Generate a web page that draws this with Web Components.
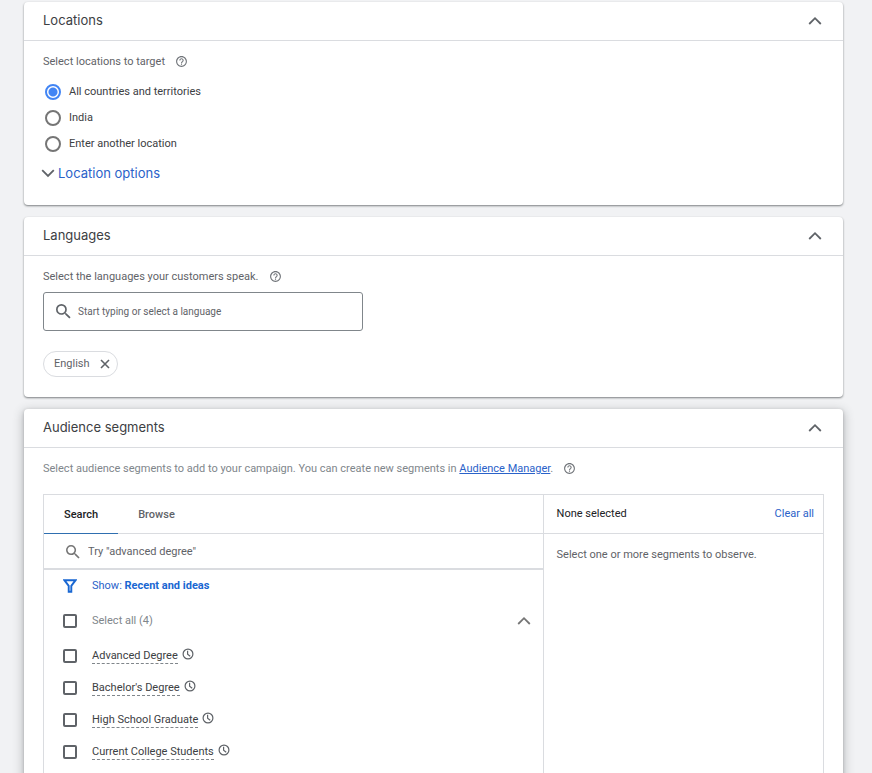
<!DOCTYPE html>
<html lang="en">
<head>
<meta charset="utf-8">
<title>Campaign settings</title>
<style>
  html { background: #f1f2f4; }
  body {
    margin: 0;
    padding: 2px 29px 24px 24px;
    font: 11px/20px Roboto, "Liberation Sans", sans-serif;
    color: #5f6368;
    --line: #dadce0;
    --blue: #2a62c9;
    --ink: #3c4043;
    --icon: #5f6368;
  }
</style>
</head>
<body>
<campaign-settings></campaign-settings>

<script>
const ICONS = {
  up: ['0 0 14 14', '<path d="M1.2 10 7 4.2 12.8 10" fill="none" stroke="currentColor" stroke-width="1.8"/>'],
  down: ['0 0 14 14', '<path d="M1.2 4.2 7 10l5.800-5.800" fill="none" stroke="currentColor" stroke-width="1.8"/>'],
  help: ['0 0 24 24', '<path fill="currentColor" d="M11 18h2v-2h-2v2zm1-16C6.480 2 2 6.480 2 12s4.480 10 10 10 10-4.480 10-10S17.520 2 12 2zm0 18c-4.410 0-8-3.590-8-8s3.590-8 8-8 8 3.590 8 8-3.590 8-8 8zm0-14c-2.210 0-4 1.790-4 4h2c0-1.100.9-2 2-2s2 .9 2 2c0 2-3 1.750-3 5h2c0-2.250 3-2.500 3-5 0-2.210-1.790-4-4-4z"/>'],
  search: ['3 3 18 18', '<path fill="currentColor" d="M15.500 14h-.79l-.28-.27A6.471 6.471 0 0 0 16 9.500 6.500 6.500 0 1 0 9.500 16c1.610 0 3.090-.59 4.230-1.570l.27.28v.79l5 4.990L20.490 19l-4.990-5zm-6 0C7.010 14 5 11.990 5 9.500S7.010 5 9.500 5 14 7.010 14 9.500 11.990 14 9.500 14z"/>'],
  clear: ['0 0 10 10', '<path d="M1 1l8 8M9 1 1 9" fill="none" stroke="currentColor" stroke-width="1.600"/>'],
  filter: ['0 0 14 14', '<path d="M1.400 1.200h11.200L8.300 6.800v5.900H5.700V6.800z" fill="none" stroke="currentColor" stroke-width="1.900"/>'],
  clock: ['0 0 12 12', '<g fill="none" stroke="currentColor" stroke-width="1.200"><circle cx="6" cy="6" r="4.900"/><path d="M5.600 2.800v3.500l2.600 2"/></g>']
};

const RESET = `
  *, ::before, ::after { box-sizing: border-box; }
  button, input { font: inherit; color: inherit; margin: 0; }
  button { background: none; border: 0; padding: 0; cursor: pointer; }
  a { color: var(--blue); }
`;

class BaseElement extends HTMLElement {
  constructor() {
    super();
    this.attachShadow({ mode: 'open' });
  }
  connectedCallback() {
    this.shadowRoot.innerHTML = `<style>${RESET}${this.styles()}</style>${this.markup()}`;
  }
}

class UiIcon extends BaseElement {
  styles() {
    return `:host { display: inline-flex; flex: none; width: var(--size, 14px); height: var(--size, 14px); }
      svg { width: 100%; height: 100%; display: block; }`;
  }
  markup() {
    const [box, body] = ICONS[this.getAttribute('name')];
    return `<svg viewBox="${box}" aria-hidden="true">${body}</svg>`;
  }
}
customElements.define('ui-icon', UiIcon);

class HelpTip extends BaseElement {
  styles() {
    return `:host { display: inline-flex; padding-bottom: 2px; } button { display: flex; color: #6f7378; }
      ui-icon { --size: 13px; }`;
  }
  markup() { return `<button type="button" aria-label="Help"><ui-icon name="help"></ui-icon></button>`; }
}
customElements.define('help-tip', HelpTip);

class SettingsCard extends BaseElement {
  styles() {
    return `
      :host { display: block; background: #fff; border-radius: 4px;
        box-shadow: 0 1px 2px rgba(60,64,67,.5), 0 1px 2px rgba(60,64,67,.2); }
      :host([raised]) { box-shadow: 0 1px 3px rgba(60,64,67,.3), 0 3px 10px 2px rgba(60,64,67,.25); }
      header { display: flex; align-items: center; justify-content: space-between;
        height: 39px; padding: 0 21px 0 19px; border-bottom: 1px solid var(--line); }
      h2 { margin: 0; padding-bottom: 2px; font: 400 13px/20px Inter, Roboto, sans-serif; color: var(--ink); }
      header button { display: flex; color: var(--icon); }
      .body { padding: 11px 19px 20px; }`;
  }
  markup() {
    const t = this.getAttribute('heading');
    return `<header><h2>${t}</h2><button type="button" aria-label="Collapse ${t}"><ui-icon name="up"></ui-icon></button></header>
      <div class="body"><slot></slot></div>`;
  }
}
customElements.define('settings-card', SettingsCard);

class LocationPicker extends BaseElement {
  styles() {
    return `
      :host { display: block; padding-bottom: 2px; }
      fieldset { border: 0; margin: 0; padding: 0; }
      legend { padding: 0; display: flex; align-items: center; gap: 10px; margin-bottom: 7px; }
      label { display: flex; align-items: center; gap: 8px; height: 26px; padding-left: 2px; color: var(--ink); }
      input { appearance: none; width: 16px; height: 16px; border: 2px solid #757575; border-radius: 50%; background: #fff; }
      input:checked { border-color: #4285f4; background: radial-gradient(circle, #4285f4 4px, transparent 5px); }
      .options { display: flex; align-items: center; gap: 3px; margin-top: 6px; color: var(--blue);
        font: 13px/20px Inter, Roboto, sans-serif; margin-left: -2px; }
      .options ui-icon { color: var(--icon); }`;
  }
  markup() {
    const items = ['All countries and territories', 'India', 'Enter another location'];
    return `<fieldset><legend>Select locations to target <help-tip></help-tip></legend>
      ${items.map((t, i) => `<label><input type="radio" name="loc" ${i ? '' : 'checked'}><span>${t}</span></label>`).join('')}
      </fieldset>
      <button class="options" type="button"><ui-icon name="down"></ui-icon>Location options</button>`;
  }
}
customElements.define('location-picker', LocationPicker);

class LanguageChip extends BaseElement {
  styles() {
    return `:host { display: inline-flex; align-items: center; gap: 10px; height: 26px; padding: 0 7px 0 10px;
        border: 1px solid var(--line); border-radius: 13px; box-sizing: border-box; }
      button { display: flex; } ui-icon { --size: 10px; }`;
  }
  markup() { return `<slot></slot><button type="button" aria-label="Remove"><ui-icon name="clear"></ui-icon></button>`; }
}
customElements.define('language-chip', LanguageChip);

class LanguagePicker extends BaseElement {
  styles() {
    return `
      :host { display: block; }
      .row { display: flex; align-items: center; gap: 10px; margin-bottom: 5px; }
      .field { display: flex; align-items: center; gap: 7px; width: 320px; max-width: 100%; height: 39px;
        padding: 0 12px; border: 1px solid #80868b; border-radius: 3px; margin-bottom: 20px; }
      .field ui-icon { --size: 15px; color: var(--icon); }
      input { flex: 1; min-width: 0; border: 0; outline: 0; padding: 0; background: none; font-size: 10px; }
      input::placeholder { color: #5f6368; opacity: 1; }
      .chips { display: flex; gap: 8px; }`;
  }
  markup() {
    return `<div class="row"><label for="lang">Select the languages your customers speak.</label><help-tip></help-tip></div>
      <div class="field"><ui-icon name="search"></ui-icon><input id="lang" type="text" placeholder="Start typing or select a language"></div>
      <div class="chips"><language-chip>English</language-chip></div>`;
  }
}
customElements.define('language-picker', LanguagePicker);

class SegmentRow extends BaseElement {
  styles() {
    return `
      :host { display: flex; align-items: center; height: 32px; padding: 0 12px 0 19px; }
      :host([all]) { height: 38px; }
      label { display: flex; align-items: center; gap: 15px; color: var(--ink); }
      :host([all]) label { color: #80868b; }
      input { appearance: none; width: 14px; height: 14px; border: 2px solid #5f6368; border-radius: 2px; background: #fff; }
      .name { line-height: 14px; border-bottom: 1px dashed #80868b; }
      :host([all]) .name { border: 0; }
      .clock { --size: 12px; margin: 0 0 4px 4px; color: var(--icon); }
      button { display: flex; margin-left: auto; color: #757575; }`;
  }
  markup() {
    return `<label><input type="checkbox"><span class="name"><slot></slot></span></label>` +
      (this.hasAttribute('all')
        ? `<button type="button" aria-label="Collapse"><ui-icon name="up"></ui-icon></button>`
        : `<ui-icon class="clock" name="clock"></ui-icon>`);
  }
}
customElements.define('segment-row', SegmentRow);

class SegmentPicker extends BaseElement {
  styles() {
    return `
      :host { display: block; }
      .intro { display: flex; align-items: center; gap: 10px; margin-bottom: 15px; color: #80868b; }
      .panel { display: grid; grid-template-columns: 16fr 9fr; border: 1px solid var(--line); }
      .left { padding-bottom: 12px; }
      .right { border-left: 1px solid var(--line); }
      .tabs, .head { display: flex; height: 39px; border-bottom: 1px solid var(--line); }
      .tabs button { padding: 2px 20px 0; font-weight: 500; margin-bottom: -1px; border-bottom: 1px solid transparent; }
      .tabs button[aria-selected=true] { color: #202124; border-color: #2f6fb0; }
      .head { align-items: center; justify-content: space-between; padding: 0 9px 0 13px; color: #202124; }
      .head button { color: var(--blue); }
      .note { margin: 0; padding: 11px 13px; }
      .search { display: flex; align-items: center; gap: 8px; height: 36px; padding: 2px 22px 0; border-bottom: 2px solid var(--line); }
      .search ui-icon { color: #757575; }
      .search input { flex: 1; min-width: 0; border: 0; outline: 0; padding: 0; background: none; }
      .search input::placeholder { color: #5f6368; opacity: 1; }
      .filter { display: flex; align-items: center; gap: 15px; height: 32px; padding: 0 19px; color: var(--blue); }
      .filter ui-icon { color: #1967d2; }
      b { font-weight: 700; color: #1967d2; }`;
  }
  markup() {
    const names = ['Advanced Degree', "Bachelor's Degree", 'High School Graduate', 'Current College Students'];
    return `
      <div class="intro"><span>Select audience segments to add to your campaign. You can create new segments in <a href="#">Audience Manager</a>.</span><help-tip></help-tip></div>
      <div class="panel">
        <div class="left">
          <div class="tabs" role="tablist">
            <button type="button" role="tab" aria-selected="true">Search</button>
            <button type="button" role="tab" aria-selected="false">Browse</button>
          </div>
          <div class="search"><ui-icon name="search"></ui-icon><input type="text" aria-label="Search segments" placeholder='Try "advanced degree"'></div>
          <button class="filter" type="button"><ui-icon name="filter"></ui-icon><span>Show: <b>Recent and ideas</b></span></button>
          <segment-row all>Select all (4)</segment-row>
          ${names.map(n => `<segment-row>${n}</segment-row>`).join('')}
        </div>
        <div class="right">
          <div class="head"><span>None selected</span><button type="button">Clear all</button></div>
          <p class="note">Select one or more segments to observe.</p>
        </div>
      </div>`;
  }
}
customElements.define('segment-picker', SegmentPicker);

class CampaignSettings extends BaseElement {
  styles() { return `:host { display: flex; flex-direction: column; gap: 12px; }`; }
  markup() {
    return `
      <settings-card heading="Locations"><location-picker></location-picker></settings-card>
      <settings-card heading="Languages"><language-picker></language-picker></settings-card>
      <settings-card heading="Audience segments" raised><segment-picker></segment-picker></settings-card>`;
  }
}
customElements.define('campaign-settings', CampaignSettings);
</script>
</body>
</html>
